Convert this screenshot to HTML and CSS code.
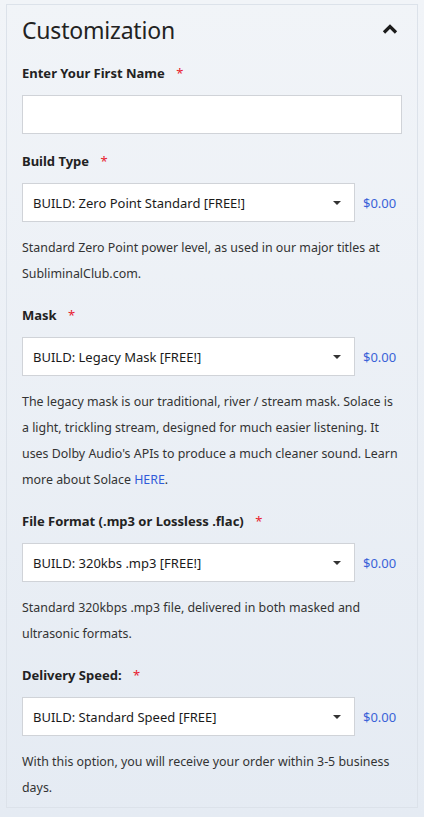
FILE: index.html
```html
<!DOCTYPE html>
<html lang="en">
<head>
<meta charset="utf-8">
<title>Customization</title>
<link rel="stylesheet" href="styles.css">
</head>
<body>
<section class="card">
  <header class="card-head">
    <h2 class="card-title">Customization</h2>
    <svg class="chevron" width="16" height="10" viewBox="0 0 16 10" aria-hidden="true">
      <path d="M2 8.5 L8 2.5 L14 8.5" fill="none" stroke="#1c1c1c" stroke-width="3.2" stroke-linecap="butt" stroke-linejoin="miter"/>
    </svg>
  </header>

  <div class="field first">
    <label class="label">Enter Your First Name <span class="req">*</span></label>
    <input class="text-input" type="text">
  </div>

  <div class="field">
    <label class="label">Build Type <span class="req">*</span></label>
    <div class="select-row">
      <div class="select"><span>BUILD: Zero Point Standard [FREE!]</span><i class="caret"></i></div>
      <span class="price">$0.00</span>
    </div>
    <p class="desc">Standard Zero Point power level, as used in our major titles at SubliminalClub.com.</p>
  </div>

  <div class="field">
    <label class="label">Mask <span class="req">*</span></label>
    <div class="select-row">
      <div class="select"><span>BUILD: Legacy Mask [FREE!]</span><i class="caret"></i></div>
      <span class="price">$0.00</span>
    </div>
    <p class="desc">The legacy mask is our traditional, river / stream mask. Solace is a light, trickling stream, designed for much easier listening. It uses Dolby Audio's APIs to produce a much cleaner sound. Learn more about Solace <a class="link" href="#">HERE</a>.</p>
  </div>

  <div class="field">
    <label class="label">File Format (.mp3 or Lossless .flac) <span class="req">*</span></label>
    <div class="select-row">
      <div class="select"><span>BUILD: 320kbs .mp3 [FREE!]</span><i class="caret"></i></div>
      <span class="price">$0.00</span>
    </div>
    <p class="desc">Standard 320kbps .mp3 file, delivered in both masked and ultrasonic formats.</p>
  </div>

  <div class="field">
    <label class="label">Delivery Speed: <span class="req">*</span></label>
    <div class="select-row">
      <div class="select"><span>BUILD: Standard Speed [FREE]</span><i class="caret"></i></div>
      <span class="price">$0.00</span>
    </div>
    <p class="desc">With this option, you will receive your order within 3-5 business days.</p>
  </div>
</section>
</body>
</html>
```

FILE: styles.css
```css
html, body {
  margin: 0;
  padding: 0;
}
body {
  background: linear-gradient(180deg, #f1f4f8 0%, #e5ebf3 100%);
  min-height: 817px;
  font-family: "Noto Sans", "Open Sans", sans-serif;
  color: #222;
  padding: 4px 6px 8px 6px;
  box-sizing: border-box;
}
.card {
  border: 1px solid #dce2ea;
  padding: 0 15px 6px 15px;
}
.card-head {
  display: flex;
  align-items: center;
  justify-content: space-between;
  height: 50px;
}
.card-title {
  margin: 0;
  font-size: 23px;
  font-weight: 400;
  color: #222;
  letter-spacing: -0.2px;
}
.chevron {
  margin-right: 4px;
  margin-top: -2px;
}
.field {
  margin-top: 18px;
}
.field.first {
  margin-top: 8px;
}
.field.first + .field {
  margin-top: 17px;
}
.label {
  display: block;
  font-size: 13px;
  font-weight: 700;
  line-height: 20px;
  color: #222;
  margin-bottom: 12px;
}
.req {
  color: #e8202f;
  font-weight: 400;
  margin-left: 8px;
}
.text-input {
  display: block;
  width: 100%;
  box-sizing: border-box;
  height: 39px;
  border: 1px solid #d0d3d8;
  background: #fff;
  margin: 0;
  padding: 0 10px;
  font: inherit;
}
.select-row {
  display: flex;
  align-items: center;
  gap: 8px;
}
.select {
  width: 333px;
  height: 39px;
  box-sizing: border-box;
  border: 1px solid #d0d3d8;
  background: #fff;
  display: flex;
  align-items: center;
  justify-content: space-between;
  padding: 0 13px 0 10px;
  font-size: 13px;
  color: #1a1a1a;
}
.caret {
  width: 0;
  height: 0;
  border-left: 4px solid transparent;
  border-right: 4px solid transparent;
  border-top: 4px solid #333;
}
.price {
  font-size: 13px;
  color: #3a63d8;
}
.desc {
  margin: 13px 0 0 0;
  font-size: 12.4px;
  line-height: 26px;
  color: #333;
}
.link {
  color: #2f5bd9;
  text-decoration: none;
}
```
